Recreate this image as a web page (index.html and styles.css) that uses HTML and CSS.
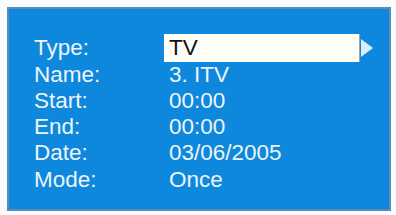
FILE: index.html
```
<!DOCTYPE html>
<html lang="en">
<head>
    <meta charset="UTF-8">
    <title>Timer Setup</title>
    <link rel="stylesheet" href="styles.css">
</head>
<body>
    <div class="timer-panel">
        <div class="timer-row first">
            <span class="timer-label">Type:</span>
            <div class="timer-select">
                <span class="timer-select-box">TV</span>
                <span class="timer-arrow"></span>
            </div>
        </div>
        <div class="timer-row">
            <span class="timer-label">Name:</span>
            <span class="timer-value">3. ITV</span>
        </div>
        <div class="timer-row">
            <span class="timer-label">Start:</span>
            <span class="timer-value">00:00</span>
        </div>
        <div class="timer-row">
            <span class="timer-label">End:</span>
            <span class="timer-value">00:00</span>
        </div>
        <div class="timer-row">
            <span class="timer-label">Date:</span>
            <span class="timer-value">03/06/2005</span>
        </div>
        <div class="timer-row last">
            <span class="timer-label">Mode:</span>
            <span class="timer-value">Once</span>
        </div>
    </div>
</body>
</html>
```

FILE: styles.css
```
body {
    margin: 0;
    background: #fbfbfb;
    font-family: "Liberation Sans", Arial, sans-serif;
}
.timer-panel {
    box-sizing: border-box;
    width: 384px;
    height: 204px;
    margin: 7px 0 0 7px;
    padding: 24px 0 0 25px;
    background: #0d88dc;
    border: 2px solid #5a8cba;
    color: #eef4fa;
    font-size: 22.5px;
}
.timer-row {
    display: flex;
    align-items: center;
    height: 26px;
    line-height: 26px;
}
.timer-row.first {
    height: 29px;
}
.timer-row.last {
    margin-top: 1px;
}
.timer-label {
    width: 135px;
    flex: none;
}
.timer-select {
    display: flex;
    align-items: center;
    margin-left: -5px;
}
.timer-select-box {
    width: 190px;
    height: 28px;
    line-height: 28px;
    padding-left: 5px;
    background: #fffdf8;
    color: #111;
    border-right: 1px solid #9aa4ad;
}
.timer-arrow {
    width: 0;
    height: 0;
    border-top: 9px solid transparent;
    border-bottom: 9px solid transparent;
    border-left: 12px solid #dcecf8;
    margin-left: 1px;
}
```
